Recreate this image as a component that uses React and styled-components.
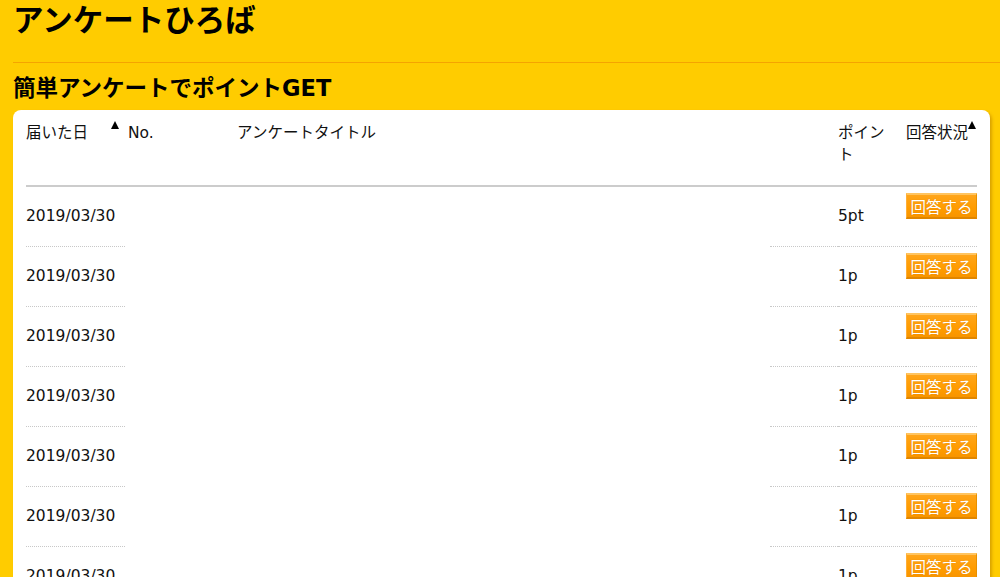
import React from "react";
import styled, { createGlobalStyle } from "styled-components";

const Global = createGlobalStyle`
  html, body { margin: 0; padding: 0; background: #ffcc00; overflow: hidden; }
  body { font-family: "DejaVu Sans", "Noto Sans CJK JP", sans-serif; color: #111; }
`;

const Page = styled.div`
  width: 1000px;
  height: 577px;
  overflow: hidden;
  background: #ffcc00;
`;

const Title = styled.h1`
  margin: 0;
  padding-left: 13px;
  font-size: 30.5px;
  line-height: 41px;
  font-weight: bold;
  color: #000;
`;

const Divider = styled.div`
  margin: 21px 0 0 13px;
  height: 1px;
  background: #f5a400;
`;

const SubTitle = styled.h2`
  margin: 10px 0 0;
  padding-left: 13px;
  font-size: 22.5px;
  line-height: 30px;
  font-weight: bold;
  color: #000;
`;

const Card = styled.div`
  margin: 7px 0 0 13px;
  width: 977px;
  box-sizing: border-box;
  background: #fff;
  border-radius: 8px;
  box-shadow: 2px 2px 3px rgba(170, 110, 0, 0.45);
  padding: 0 13px 20px;
`;

const Grid = styled.div`
  display: grid;
  grid-template-columns: 99px 109px 1fr 68px 68px 71px;
  font-size: 15.5px;
  line-height: 22px;
`;

const HeadCell = styled.div`
  height: 77px;
  box-sizing: border-box;
  padding: 12px ${(p) => p.$pr || 0}px 0 ${(p) => p.$pl || 0}px;
  border-bottom: 2px solid #cccccc;
  display: flex;
  justify-content: ${(p) => (p.$spread ? "space-between" : "flex-start")};
  align-items: flex-start;
`;

const Arrow = styled.span`
  width: 0;
  height: 0;
  margin: -1px ${(p) => p.$mr || 0}px 0 0;
  border-left: 4.5px solid transparent;
  border-right: 4.5px solid transparent;
  border-bottom: 8px solid #000;
`;

const Cell = styled.div`
  height: 60px;
  box-sizing: border-box;
  padding-left: ${(p) => p.$pl || 0}px;
  border-bottom: 1px dotted ${(p) => (p.$line ? "#c8c8c8" : "transparent")};
  display: flex;
  align-items: ${(p) => (p.$top ? "flex-start" : "center")};
  padding-top: ${(p) => (p.$top ? 6 : 0)}px;
  padding-bottom: ${(p) => (p.$top ? 0 : 1)}px;
`;

const AnswerButton = styled.button`
  width: 72px;
  height: 26px;
  margin: 0;
  padding: 0;
  box-sizing: border-box;
  background: linear-gradient(#ffa51a, #ff9c00 60%, #f89500);
  border: none;
  border-top: 2px solid #ffc460;
  border-bottom: 2px solid #e08600;
  border-right: 1px solid #e89000;
  border-left: 1px solid #ffae35;
  color: #fff;
  font-family: "Noto Sans CJK JP", sans-serif;
  font-size: 15.5px;
  line-height: 20px;
  text-shadow: 0 0 1px rgba(190, 100, 0, 0.6);
  cursor: pointer;
`;

const rows = ["5pt", "1p", "1p", "1p", "1p", "1p", "1p"];

export default function App() {
  return (
    <Page>
      <Global />
      <Title>アンケートひろば</Title>
      <Divider />
      <SubTitle>簡単アンケートでポイントGET</SubTitle>
      <Card>
        <Grid>
          <HeadCell $spread>
            <span>届いた日</span>
            <Arrow $mr={6} />
          </HeadCell>
          <HeadCell $pl={3}>No.</HeadCell>
          <HeadCell $pl={3}>アンケートタイトル</HeadCell>
          <HeadCell />
          <HeadCell $pr={12}>ポイント</HeadCell>
          <HeadCell>
            <span>回答状況</span>
            <Arrow />
          </HeadCell>
          {rows.map((pt, i) => (
            <React.Fragment key={i}>
              <Cell $line>2019/03/30</Cell>
              <Cell />
              <Cell />
              <Cell $line />
              <Cell $line>{pt}</Cell>
              <Cell $line $top>
                <AnswerButton>回答する</AnswerButton>
              </Cell>
            </React.Fragment>
          ))}
        </Grid>
      </Card>
    </Page>
  );
}
